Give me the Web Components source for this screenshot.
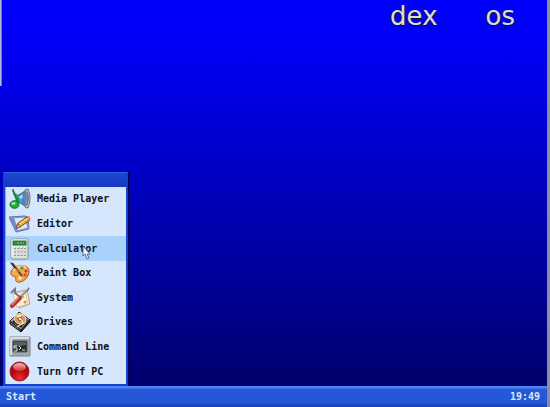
<!DOCTYPE html>
<html lang="en">
<head>
<meta charset="utf-8">
<title>Dex OS</title>
<style>
  html, body {
    height: 100%;
    margin: 0;
    overflow: hidden;
  }
  body {
    font: bold 10px/12px "DejaVu Sans Mono", monospace;
  }
</style>
</head>
<body>
<dex-desktop>
  <dex-logo slot="logo"></dex-logo>
  <start-menu slot="menu">
    <menu-entry icon="media">Media Player</menu-entry>
    <menu-entry icon="editor">Editor</menu-entry>
    <menu-entry icon="calculator" active>Calculator</menu-entry>
    <menu-entry icon="paint">Paint Box</menu-entry>
    <menu-entry icon="system">System</menu-entry>
    <menu-entry icon="drives">Drives</menu-entry>
    <menu-entry icon="command">Command Line</menu-entry>
    <menu-entry icon="power">Turn Off PC</menu-entry>
  </start-menu>
  <task-bar slot="bar" time="19:49"></task-bar>
</dex-desktop>

<script>
const icons = {
  media: `
    <path d="M8 8 13 5 19 1v19l-6-4-5-3z" fill="#3e9fd6" stroke="#2c5c88"/>
    <path d="m9 9 6-3v4l-6 1z" fill="#a5e2f8"/>
    <ellipse cx="17.500" cy="10.500" rx="3.500" ry="9.500" fill="#b9c0ce" stroke="#69728a"/>
    <ellipse cx="17" cy="10.500" rx="2.200" ry="7" fill="#8390ac" stroke="#5a6784"/>
    <ellipse cx="16" cy="10.500" rx="1.300" ry="3.500" fill="#4a8ed0"/>
    <path d="M4 1v1c0 4 6 4 6 8 0 2-1 3-1 3 0-4-3-5-4-6z" fill="#35b958" stroke="#17733b" stroke-width=".7"/>
    <path d="M4 2c1 5 4 6 4 14" fill="none" stroke="#178040" stroke-width="1.800"/>
    <ellipse cx="5.500" cy="16.500" rx="4.500" ry="3.800" fill="#25aa3b" stroke="#10702c"/>
    <ellipse cx="4.500" cy="15.500" rx="2.200" ry="1.200" fill="#a3f29b"/>`,
  editor: `
    <path d="M0 4 16 3l3 1 1 12-13 3z" fill="#8ea3cf" stroke="#6377a6"/>
    <path d="m2 5 14-1 3 11-12 3z" fill="#dfe9fd" stroke="#7e92c2"/>
    <path d="m1 5 6 13 2-2L5 5z" fill="#7189c5"/>
    <path d="m7 15 2-5L18 4l3 3-10 7z" fill="#f3ad35" stroke="#714b24"/>
    <path d="m10 11 9-6" stroke="#ffe6a0"/>
    <path d="m7 15 2-4 2 3z" fill="#f2d9b2" stroke="#54442e" stroke-width=".7"/>
    <path d="m18 4 2-1 2 3-2 1z" fill="#d88975"/>`,
  calculator: `
    <rect x="2" y="1" width="17" height="20" rx="1.500" fill="#dfe3df" stroke="#858d89"/>
    <path d="M3 2h15M3 2v17" stroke="#fff" fill="none"/>
    <rect x="4" y="3" width="13" height="4" fill="#2c8f3a" stroke="#246039" stroke-width=".8"/>
    <path d="M8 5h7" stroke="#8bd77a" stroke-dasharray="2 1"/>
    <path d="M5 10h12M5 13.500h12M5 17h12" stroke="#89918e" stroke-width="2" stroke-dasharray="2 1.300"/>
    <path d="M5 9.500h12M5 13h12M5 16.500h12" stroke="#fff" stroke-dasharray="1.500 1.800"/>`,
  paint: `
    <path d="M2 10c1-6 14-9 17-4 3 4-1 13-8 14-4 1-5-2-4-4 0-2-6-1-5-6z" fill="#f0a94d" stroke="#a8591f"/>
    <path d="M5 9c2-5 10-6 12-3" fill="none" stroke="#ffdb91" stroke-width="2"/>
    <circle cx="8" cy="8" r="1.700" fill="#e9c340"/><circle cx="13" cy="6" r="1.700" fill="#48a342"/>
    <circle cx="17" cy="9" r="1.600" fill="#cd3929"/><circle cx="16" cy="13" r="1.700" fill="#c9503d"/>
    <circle cx="11" cy="16" r="1.600" fill="#fff0cb"/>
    <path d="M3 1 13 14" stroke="#6d3928" stroke-width="2"/>
    <path d="m3 2 7 8" stroke="#dc7a42"/>
    <path d="m1 0 4 2 3 5-3-1-3-4z" fill="#473a3b"/>`,
  system: `
    <path d="m7 5 11-2 3 14-11 4z" fill="#fff1cb" stroke="#b4a17a"/>
    <path d="m4 7 12-3 3 13-11 3z" fill="#f9f4e4" stroke="#c6b992" stroke-width=".8"/>
    <circle cx="14" cy="10" r="1.300" fill="#e9a741"/><circle cx="16" cy="15" r="1.500" fill="#e48e2d"/>
    <path d="m2 6 4-4v4l5 4" fill="none" stroke="#727982" stroke-width="2"/>
    <path d="M20 1 9 12" stroke="#515c6b" stroke-width="2"/>
    <path d="m19 1-8 9" stroke="#eef3f7"/>
    <path d="m3 19 8-8" stroke="#b82f28" stroke-width="4" stroke-linecap="round"/>
    <path d="m3 18 7-8" stroke="#f0847a" stroke-width="1.500"/>`,
  drives: `
    <path d="m1 10 9-9 11 8-9 10z" fill="#b4b7b9" stroke="#202225"/>
    <path d="m1 10 11 9v2L1 13z" fill="#666" stroke="#17181c"/>
    <path d="m12 19 9-11v3l-9 10z" fill="#25272d" stroke="#15171b"/>
    <path d="m3 11 7-8 9 6-7 8z" fill="#292421"/>
    <ellipse cx="11" cy="8" rx="6" ry="5" transform="rotate(25 11 8)" fill="#d49455" stroke="#ffe0ad"/>
    <path d="M7 5 11 8 13 3z" fill="#fff2d0"/>
    <circle cx="11" cy="8" r="1.800" fill="#f7ead8" stroke="#76543c"/>
    <path d="m8 16 6-4-2-4" fill="none" stroke="#e9d8bc" stroke-width="1.500"/>`,
  command: `
    <path d="M1 1h20v19H1z" fill="#a3a7b0" stroke="#7e8594"/>
    <path d="M2 19V2h18" fill="none" stroke="#edf0f3" stroke-width="1.500"/>
    <path d="M4 5h14v11H4z" fill="#252c2b" stroke="#596365"/>
    <path d="M5 6h12v3L5 11z" fill="#59625e"/>
    <path d="M8 10H5v2h3v3H5M10 10l2 2-2 2M13 14h3" fill="none" stroke="#e1e6df"/>`,
  power: `
    <defs>
      <radialGradient id="red" cx=".5" cy=".85" r=".8">
        <stop stop-color="#e93138"/><stop offset=".5" stop-color="#c00711"/><stop offset="1" stop-color="#960711"/>
      </radialGradient>
      <linearGradient id="shine" x2="0" y2="1">
        <stop stop-color="#ffd8d4"/><stop offset="1" stop-color="#d03a3e"/>
      </linearGradient>
    </defs>
    <circle cx="10.500" cy="10.500" r="9.500" fill="url(#red)" stroke="#a5181d"/>
    <ellipse cx="10.500" cy="6" rx="6.500" ry="4" fill="url(#shine)" opacity=".85"/>`
};

class DexDesktop extends HTMLElement {
  connectedCallback() {
    this.attachShadow({ mode: 'open' });
    this.shadowRoot.innerHTML = `
      <style>
        :host {
          display: flex;
          flex-direction: column;
          box-sizing: border-box;
          height: 100vh;
          border-right: 3px solid #8c8ca4;
          position: relative;
          background: linear-gradient(#00f 0, #0000f4 12%, #0000b0 55%, #00006c 95%);
        }
        :host::before {
          content: "";
          position: absolute;
          left: 0;
          top: 0;
          width: 2px;
          height: 86px;
          background: linear-gradient(90deg, #b4b4e0 50%, #7474d8 50%);
        }
        main {
          flex: 1;
          display: flex;
          flex-direction: column;
          justify-content: space-between;
          align-items: flex-start;
          min-height: 0;
        }
        ::slotted(dex-logo) {
          align-self: flex-end;
        }
      </style>
      <main>
        <slot name="logo"></slot>
        <slot name="menu"></slot>
      </main>
      <slot name="bar"></slot>
    `;
  }
}

class DexLogo extends HTMLElement {
  connectedCallback() {
    this.attachShadow({ mode: 'open' });
    this.shadowRoot.innerHTML = `
      <style>
        :host {
          display: flex;
          gap: 48px;
          padding-right: 32px;
          font: 26px/32px "DejaVu Sans", sans-serif;
          color: #dcdce4;
          text-shadow: 1px 1px #101030, -1px 0 #202050;
        }
      </style>
      <span>dex</span>
      <span>os</span>
    `;
  }
}

class StartMenu extends HTMLElement {
  connectedCallback() {
    this.attachShadow({ mode: 'open' });
    this.shadowRoot.innerHTML = `
      <style>
        :host {
          display: block;
          box-sizing: border-box;
          min-width: 125px;
          margin-left: 3px;
          border: 2px solid #1741cc;
          border-top: 1px solid #2c63e4;
          box-shadow: 1px 0 #000058;
          background: #d6e6fc;
        }
        header {
          height: 14px;
          background: linear-gradient(#1b48cf, #1638c0);
        }
        nav {
          display: grid;
          grid-auto-rows: 1fr;
          height: 197px;
          border-left: 1px solid #7ca8f4;
        }
      </style>
      <header></header>
      <nav><slot></slot></nav>
    `;
  }
}

class MenuEntry extends HTMLElement {
  connectedCallback() {
    this.attachShadow({ mode: 'open' });
    this.shadowRoot.innerHTML = `
      <style>
        :host {
          display: block;
          color: #101018;
        }
        button {
          position: relative;
          display: flex;
          align-items: center;
          gap: 6px;
          width: 100%;
          height: 100%;
          padding: 0 14px 0 3px;
          border: 0;
          background: none;
          color: inherit;
          font: inherit;
          text-align: left;
          white-space: nowrap;
        }
        button:hover,
        :host([active]) button {
          background: #a8d2fc;
        }
        .icon {
          width: 22px;
          height: 22px;
          flex: none;
        }
        .pointer {
          position: absolute;
          left: 76px;
          top: 9px;
        }
      </style>
      <button type="button">
        <svg class="icon" viewBox="0 0 22 22" fill="none" aria-hidden="true">${icons[this.getAttribute('icon')]}</svg>
        <slot></slot>
        ${this.hasAttribute('active') ? `
        <svg class="pointer" width="10" height="15" viewBox="0 0 10 15" aria-hidden="true">
          <path d="M1 1v10l2-2 2 5 2-1-2-4h3z" fill="#eef4fc" stroke="#46516c" stroke-width=".8"/>
        </svg>` : ''}
      </button>
    `;
  }
}

class TaskBar extends HTMLElement {
  connectedCallback() {
    this.attachShadow({ mode: 'open' });
    this.shadowRoot.innerHTML = `
      <style>
        :host {
          display: flex;
          justify-content: space-between;
          align-items: center;
          box-sizing: border-box;
          height: 21px;
          padding: 0 7px 0 6px;
          background: linear-gradient(#4c84f4 0, #4c84f4 2px, #2458d8 3px, #2458d8 17px, #1c46bc 19px, #1c46bc 100%);
          color: #dce8fc;
        }
        button {
          padding: 0;
          border: 0;
          background: none;
          color: inherit;
          font: inherit;
        }
      </style>
      <button type="button">Start</button>
      <time>${this.getAttribute('time')}</time>
    `;
  }
}

customElements.define('dex-desktop', DexDesktop);
customElements.define('dex-logo', DexLogo);
customElements.define('start-menu', StartMenu);
customElements.define('menu-entry', MenuEntry);
customElements.define('task-bar', TaskBar);
</script>
</body>
</html>
